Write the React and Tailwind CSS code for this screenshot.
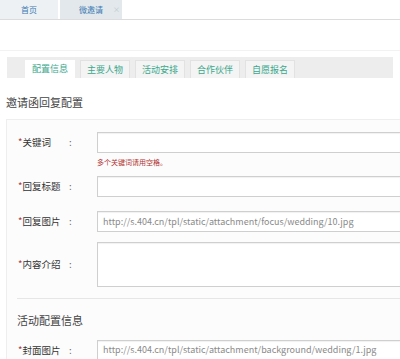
import React from 'react';

const tabs = ['配置信息', '主要人物', '活动安排', '合作伙伴', '自愿报名'];

const Field = ({ label, value, tall }) => (
  <div className="flex items-center">
    <div className="flex w-[90px] shrink-0 items-center pl-[11px] text-[9.5px] text-[#333]">
      <span className="w-[51px] whitespace-nowrap">
        <span className="text-[#a33]">*</span>
        {label}
      </span>
      <span className="text-[#666]">:</span>
    </div>
    <div
      className={`w-[320px] shrink-0 whitespace-nowrap border border-[#cfcfcf] bg-white px-[5px] text-[9px] text-[#8a8a8a] shadow-[inset_0_1px_1px_rgba(0,0,0,0.06)] ${
        tall ? 'h-[45px]' : 'flex h-[21px] items-center'
      }`}
    >
      {value}
    </div>
  </div>
);

const App = () => {
  return (
    <div
      className="h-[359px] w-[400px] overflow-hidden bg-white"
      style={{ fontFamily: '"Noto Sans CJK SC", "Open Sans", sans-serif' }}
    >
      <div className="flex h-[20px] border-b border-[#dcdcdc] bg-white">
        <div className="flex w-[58px] items-center justify-center whitespace-nowrap bg-[#eef1f3] text-[8px] text-[#3b7bb4]">
          首页
        </div>
        <div className="ml-[2px] flex w-[62px] items-center whitespace-nowrap bg-[#e2e8eb] pl-[19px] text-[8px] text-[#3b7bb4]">
          微邀请
          <span className="ml-[10px] text-[7px] text-[#b9c6cc]">×</span>
        </div>
      </div>

      <div className="mt-[30px] border-t border-[#f2f2f2] px-[7px] pt-[6px]">
        <div className="flex h-[21px] gap-[5px] bg-[#ededed] pl-[18px] pt-[3px]">
          {tabs.map((t, i) => (
            <div
              key={t}
              className={`flex h-[18px] w-[50px] items-center justify-center whitespace-nowrap text-[9px] text-[#3aa88c] ${
                i === 0 ? 'bg-white' : 'border border-b-0 border-[#e2e2e2] bg-[#f4f4f4]'
              }`}
            >
              {t}
            </div>
          ))}
        </div>
      </div>

      <div className="mt-[16px] pl-[6px] text-[11px] text-[#444]">邀请函回复配置</div>

      <div className="ml-[6px] mt-[8px] border-l border-t border-[#eeeeee] bg-[#fcfcfc] pt-[12px]">
        <Field label="关键词" />
        <div className="ml-[90px] mt-[4px] text-[7px] text-[#b03030]">多个关键词请用空格。</div>
        <div className="mt-[9px] flex flex-col gap-[14px]">
          <Field label="回复标题" />
          <Field label="回复图片" value="http://s.404.cn/tpl/static/attachment/focus/wedding/10.jpg" />
        </div>
        <div className="mt-[10px]">
          <Field label="内容介绍" tall />
        </div>
        <div className="ml-[10px] mt-[11px] border-t border-[#e6e6e6]" />
        <div className="pl-[10px] pt-[13px] text-[11px] text-[#444]">活动配置信息</div>
        <div className="mt-[11px]">
          <Field label="封面图片" value="http://s.404.cn/tpl/static/attachment/background/wedding/1.jpg" />
        </div>
      </div>
    </div>
  );
};

export default App;
